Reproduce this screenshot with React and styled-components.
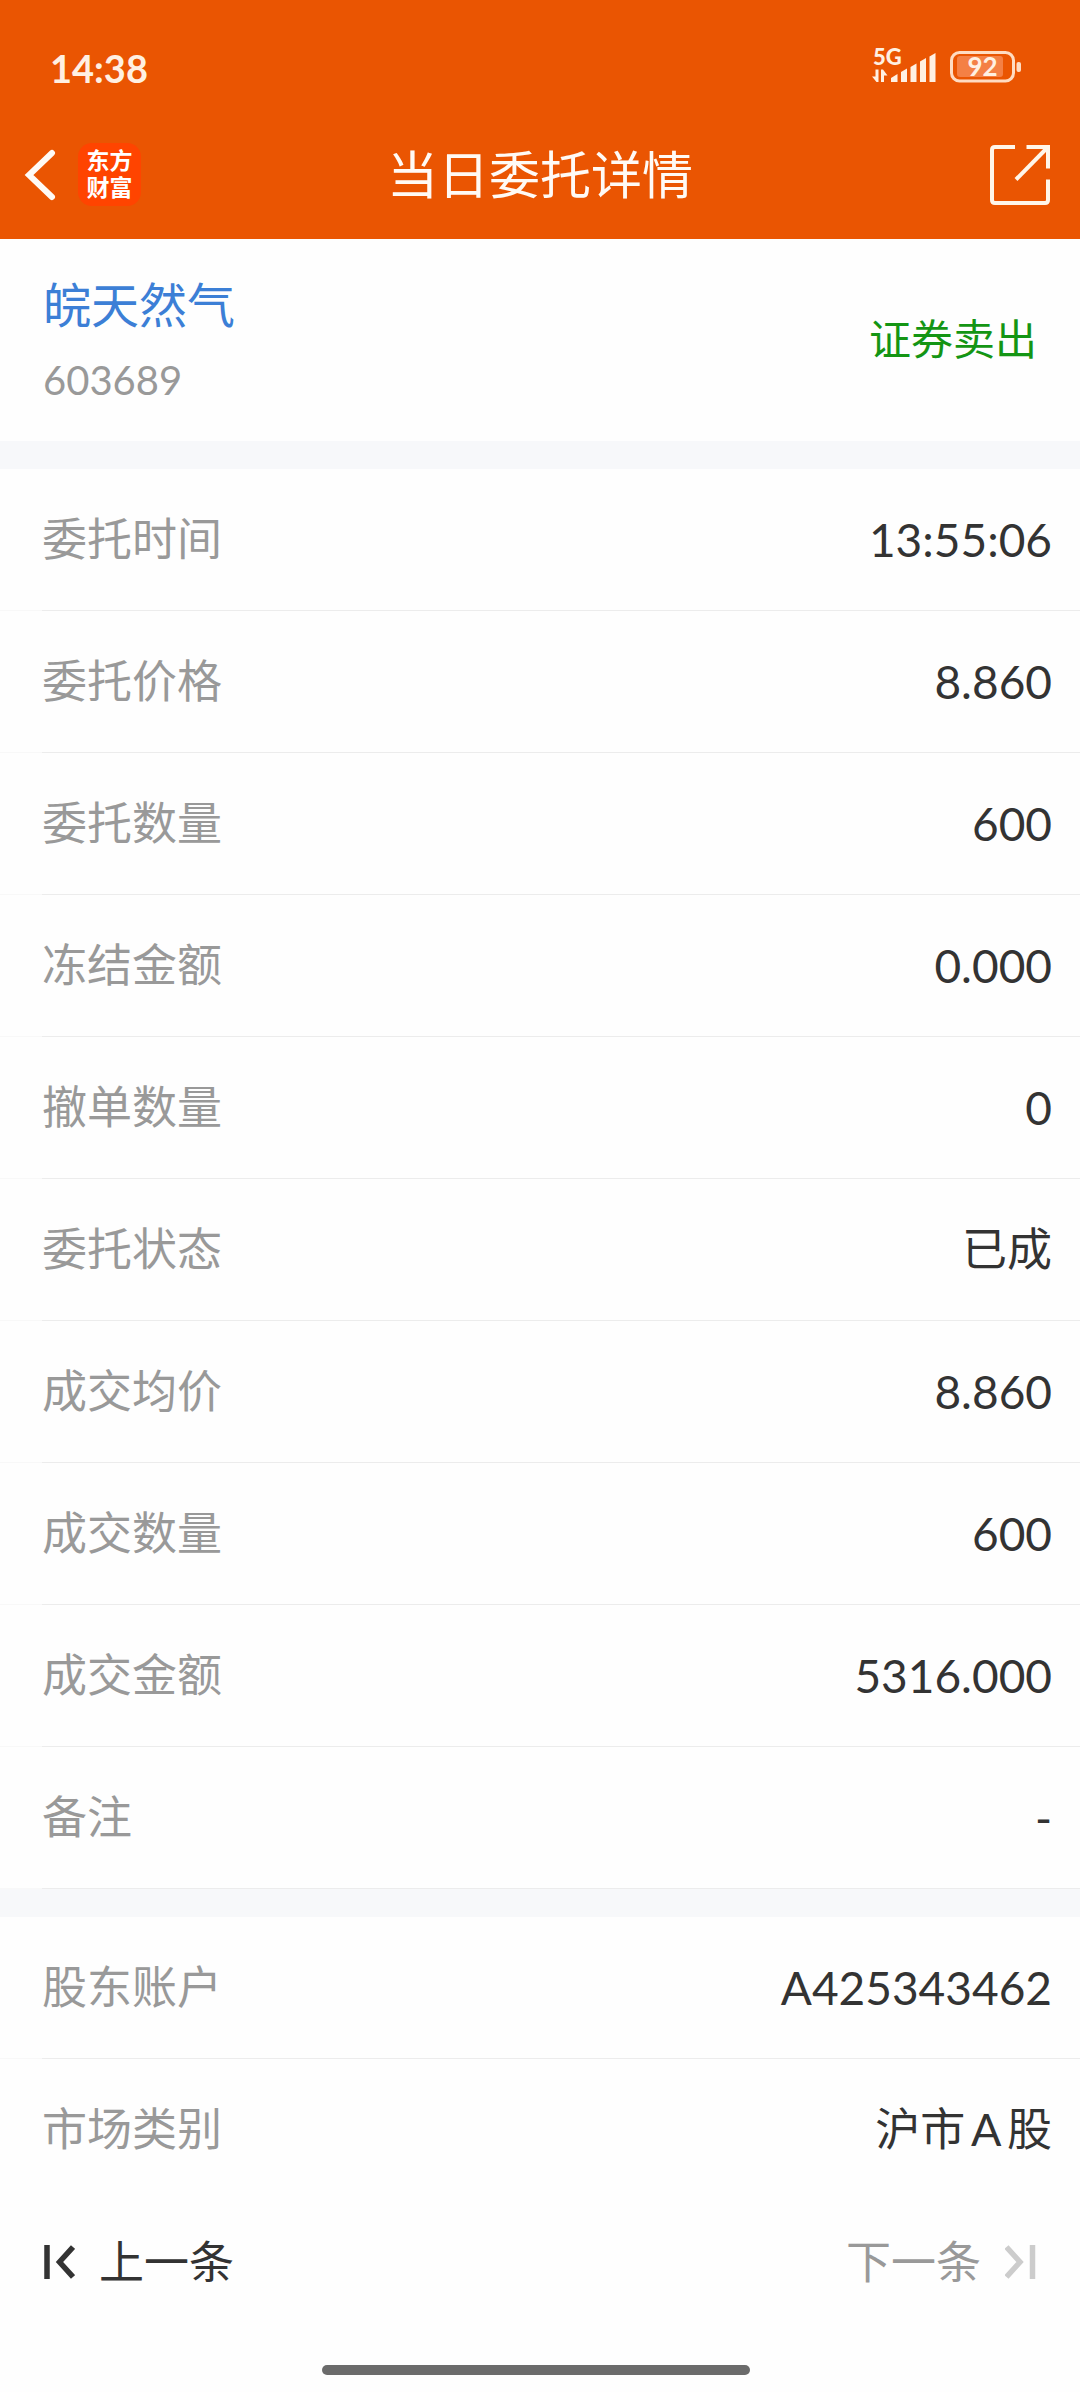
import React from 'react'
import styled, { createGlobalStyle } from 'styled-components'

const orderRows = [
  { label: '委托时间', value: '13:55:06' },
  { label: '委托价格', value: '8.860' },
  { label: '委托数量', value: '600' },
  { label: '冻结金额', value: '0.000' },
  { label: '撤单数量', value: '0' },
  { label: '委托状态', value: '已成', isText: true },
  { label: '成交均价', value: '8.860' },
  { label: '成交数量', value: '600' },
  { label: '成交金额', value: '5316.000' },
  { label: '备注', value: '-' },
]

const accountRows = [
  { label: '股东账户', value: 'A425343462' },
  { label: '市场类别', value: '沪市A股', isText: true },
]

function StatusBar() {
  return (
    <StatusRow>
      <Clock>14:38</Clock>
      <StatusIcons>
        <svg width="64" height="50" viewBox="0 -4 64 50" fill="#fff0e2" aria-label="5G">
          <text x="1" y="18" fontFamily="Lato" fontWeight="900" fontSize="22">5G</text>
          <path d="M3.500 22.500H6.500V35H4.500L0 29.500H3.500Z" />
          <path d="M9 35V22.500H11L15.500 28.500H12V35Z" />
          <path d="M19 35V31L25.500 27V35Z" />
          <path d="M29 35V25L35 21.500V35Z" />
          <path d="M38.500 35V20L44.500 16.500V35Z" />
          <path d="M48 35V14.500L54 11V35Z" />
          <path d="M57.500 35V9.500L63.500 6V35Z" />
        </svg>
        <svg width="72" height="36" viewBox="0 0 72 36" aria-label="92%">
          <rect x="1.500" y="2.500" width="62" height="28.500" rx="8" fill="none" stroke="#ffdcc2" strokeWidth="3" />
          <rect x="7" y="6" width="46" height="21" rx="3" fill="#f48045" />
          <rect x="66.500" y="12" width="4.500" height="10" rx="2" fill="#ffdcc2" />
          <text x="32.500" y="26" textAnchor="middle" fontFamily="Lato" fontWeight="700" fontSize="26" fill="#fff0e2">92</text>
        </svg>
      </StatusIcons>
    </StatusRow>
  )
}

function NavBar() {
  return (
    <NavRow>
      <NavSide>
        <IconButton type="button" aria-label="返回">
          <svg width="32" height="54" viewBox="0 0 32 54" fill="none" stroke="#fffaf5" strokeWidth="6" strokeLinecap="round">
            <path d="M28 5L5 27L28 49" />
          </svg>
        </IconButton>
        <Logo>
          <span>东方</span>
          <span>财富</span>
        </Logo>
      </NavSide>
      <Title>当日委托详情</Title>
      <NavSide $end>
        <IconButton type="button" aria-label="分享">
          <svg width="60" height="60" viewBox="0 0 60 60" fill="none" stroke="#fff6ea" strokeWidth="4">
            <path d="M25 2H5Q2 2 2 5V55Q2 58 5 58H55Q58 58 58 55V34.500" />
            <path d="M36.500 2H58V23.500" />
            <path d="M57 3L26 34.500" />
          </svg>
        </IconButton>
      </NavSide>
    </NavRow>
  )
}

function DetailList({ rows, lastLine }) {
  return (
    <List $lastLine={lastLine}>
      {rows.map((row) => (
        <Row key={row.label}>
          <Label>{row.label}</Label>
          <Value $isText={row.isText}>{row.value}</Value>
        </Row>
      ))}
    </List>
  )
}

function App() {
  return (
    <Page>
      <GlobalStyle />
      <Header>
        <StatusBar />
        <NavBar />
      </Header>
      <Summary>
        <div>
          <StockName>皖天然气</StockName>
          <StockCode>603689</StockCode>
        </div>
        <Side>证券卖出</Side>
      </Summary>
      <Divider />
      <DetailList rows={orderRows} lastLine />
      <Divider />
      <DetailList rows={accountRows} />
      <Pager>
        <PagerButton type="button">
          <svg width="32" height="34" viewBox="0 0 32 34" fill="none" stroke="#333" strokeWidth="5.500">
            <path d="M4 0V34" />
            <path d="M30 2L16.500 17L30 32" />
          </svg>
          <PagerText>上一条</PagerText>
        </PagerButton>
        <PagerButton type="button" disabled>
          <PagerText>下一条</PagerText>
          <svg width="32" height="34" viewBox="0 0 32 34" fill="none" stroke="#ccc" strokeWidth="5.500">
            <path d="M1.500 2L15 17L1.500 32" />
            <path d="M27.500 0V34" />
          </svg>
        </PagerButton>
      </Pager>
      <HomeBar />
    </Page>
  )
}

const GlobalStyle = createGlobalStyle`
  * {
    box-sizing: border-box;
  }
  body {
    margin: 0;
    background: #fefefe;
    color: #333;
    font-family: Lato, "Noto Sans CJK SC", sans-serif;
  }
`

const Page = styled.div`
  width: 100%;
  display: flex;
  flex-direction: column;
`

const Header = styled.header`
  background: #ea5502;
  color: #fffaf5;
`

const StatusRow = styled.div`
  display: flex;
  align-items: center;
  justify-content: space-between;
  height: 110px;
  padding: 26px 58px 0 50px;
`

const Clock = styled.span`
  color: #fff0e2;
  font-size: 38px;
  font-weight: 700;
`

const StatusIcons = styled.div`
  display: flex;
  align-items: center;
  gap: 14px;
`

const NavRow = styled.div`
  display: flex;
  align-items: center;
  height: 129px;
  padding: 0 24px;
`

const NavSide = styled.div`
  flex: 1;
  display: flex;
  align-items: center;
  justify-content: ${(props) => (props.$end ? 'flex-end' : 'flex-start')};
  gap: 22px;
  padding-right: 6px;
`

const IconButton = styled.button`
  display: flex;
  padding: 0;
  border: 0;
  background: none;
`

const Logo = styled.div`
  display: flex;
  flex-direction: column;
  align-items: center;
  justify-content: center;
  width: 63px;
  height: 63px;
  padding-bottom: 2px;
  border-radius: 14px;
  background: #ff4400;
  color: #fff;
  font-size: 23px;
  font-weight: 700;
  line-height: 27px;
`

const Title = styled.h1`
  margin: 0;
  font-size: 51px;
  font-weight: 400;
  line-height: 64px;
`

const Summary = styled.section`
  display: flex;
  align-items: center;
  justify-content: space-between;
  padding: 30px 43px 22px;
`

const StockName = styled.div`
  color: #3c7fd6;
  font-size: 48px;
  line-height: 72px;
`

const StockCode = styled.div`
  color: #999;
  font-size: 40px;
  line-height: 78px;
`

const Side = styled.div`
  padding-bottom: 10px;
  color: #149514;
  font-size: 42px;
  line-height: 60px;
`

const Divider = styled.div`
  height: 28px;
  background: #f7f8fa;
`

// hairline is fainter under the left inset
const Row = styled.div`
  display: flex;
  align-items: center;
  justify-content: space-between;
  height: 142px;
  padding: 0 28px 2px 42px;
  background: linear-gradient(to right, #f8f8f8 42px, #ececec 42px) bottom / 100% 1px no-repeat;
`

const List = styled.dl`
  margin: 0;

  ${Row}:last-child {
    ${(props) => !props.$lastLine && 'background: none;'}
  }
`

const Label = styled.dt`
  padding-bottom: 6px;
  color: #999;
  font-size: 45px;
`

const Value = styled.dd`
  margin: 0;
  padding-bottom: ${(props) => (props.$isText ? '6px' : '0')};
  font-size: ${(props) => (props.$isText ? '45px' : '46px')};
  text-autospace: normal;
`

const Pager = styled.nav`
  display: flex;
  align-items: center;
  justify-content: space-between;
  height: 122px;
  padding: 0 43px;
`

const PagerButton = styled.button`
  display: flex;
  align-items: center;
  gap: 24px;
  padding: 0;
  border: 0;
  background: none;
  color: #333;
  font-family: inherit;
  font-size: 45px;

  &:disabled {
    color: #999;
  }
`

const PagerText = styled.span`
  padding-bottom: 6px;
`

const HomeBar = styled.div`
  height: 10px;
  margin: 42px 330px 18px 322px;
  border-radius: 5px;
  background: #6b6b6b;
`

export default App
